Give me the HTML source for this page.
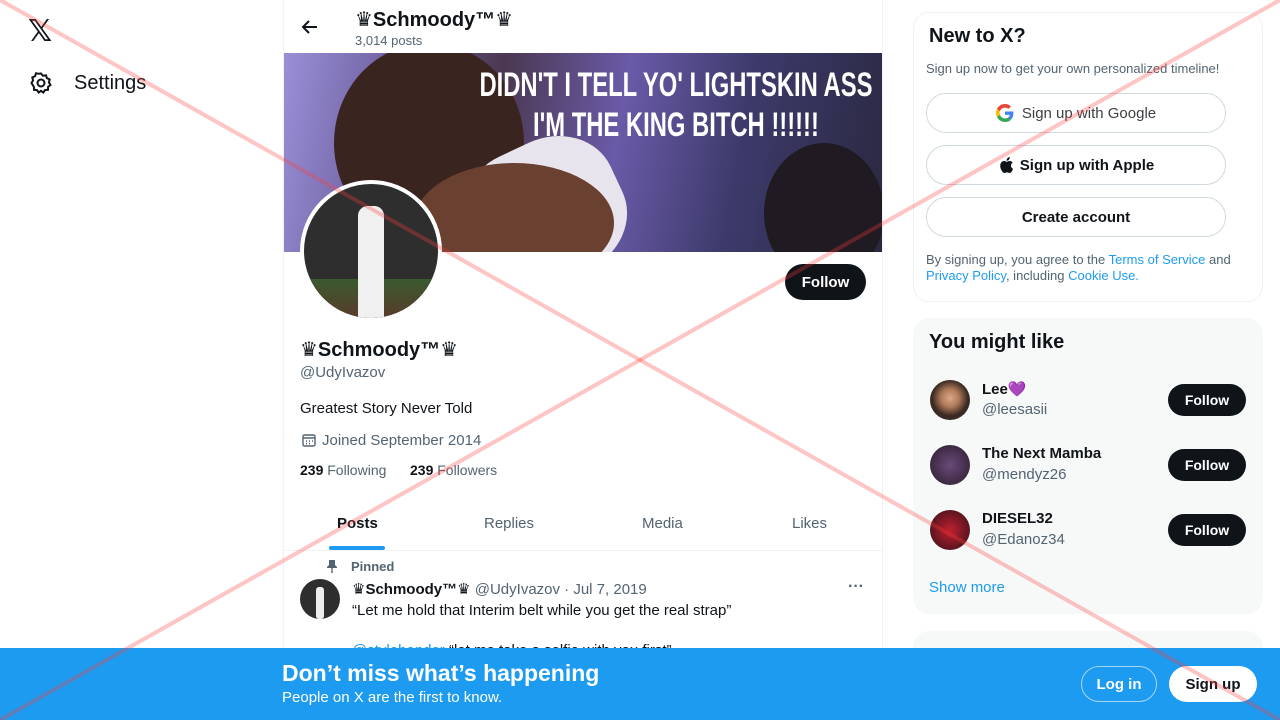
<!DOCTYPE html>
<html><head><meta charset="utf-8"><style>
*{box-sizing:border-box;margin:0;padding:0}
body{width:1280px;height:720px;overflow:hidden;background:#fff;font-family:"Liberation Sans","DejaVu Sans",sans-serif;color:#0f1419;position:relative}
.abs{position:absolute}
.btn{position:absolute;border-radius:999px;font-weight:bold;display:flex;align-items:center;justify-content:center}
.grey{color:#536471}
.blue{color:#1d9bf0}
</style></head><body>
<div class="abs" style="left:28px;top:14px;font-size:30px;font-weight:bold">𝕏</div>
<svg class="abs" style="left:29px;top:71px" width="24" height="24" viewBox="0 0 24 24" fill="none" stroke="#0f1419" stroke-width="2"><circle cx="12" cy="12" r="3.5"/><path d="M12 2.5l2 2.3 3-.5.9 2.9 2.8 1.2-.8 2.9 1.6 2.7-2.4 1.8-.1 3-3 .3-1.7 2.5-2.3-1.8-2.3 1.8-1.7-2.5-3-.3-.1-3L2.5 12l1.6-2.7-.8-2.9 2.8-1.2.9-2.9 3 .5z"/></svg>
<div class="abs" style="left:74px;top:72px;font-size:20px">Settings</div>

<div class="abs" style="left:283px;top:0;width:600px;height:720px;border-left:1px solid #eff3f4;border-right:1px solid #eff3f4"></div>
<svg class="abs" style="left:300px;top:17px" width="20" height="20" viewBox="0 0 20 20" fill="none" stroke="#0f1419" stroke-width="2"><path d="M17 10H4M9 4l-6 6 6 6"/></svg>
<div class="abs" style="left:355px;top:7px;font-size:20px;font-weight:bold">♛Schmoody™♛</div>
<div class="abs grey" style="left:355px;top:33px;font-size:13px">3,014 posts</div>
<div class="abs" style="left:284px;top:53px;width:598px;height:199px;background:linear-gradient(100deg,#9a90d8 0%,#6a5a98 20%,#4a3850 35%,#6a5aa8 55%,#3c3a6a 75%,#2a2840 100%);overflow:hidden">
 <div class="abs" style="left:50px;top:-10px;width:190px;height:200px;border-radius:50%;background:#3a2420"></div>
 <div class="abs" style="left:180px;top:90px;width:160px;height:140px;border-radius:40%;background:#e8e4ee;transform:rotate(-25deg)"></div>
 <div class="abs" style="left:130px;top:110px;width:200px;height:120px;border-radius:50%;background:#6a4030"></div>
 <div class="abs" style="left:480px;top:90px;width:120px;height:140px;border-radius:50%;background:#201a22"></div>
 <div class="abs" style="right:10px;top:12px;text-align:center;color:#fff;font-weight:bold;font-size:34px;line-height:40px;white-space:nowrap;transform:scaleX(.7);transform-origin:right">DIDN'T I TELL YO' LIGHTSKIN ASS<br>I'M THE KING BITCH !!!!!!</div>
</div>
<div class="abs" style="left:300px;top:180px;width:142px;height:142px;border-radius:50%;background:#fff;padding:4px"><div style="width:100%;height:100%;border-radius:50%;background:#2e2e2e;position:relative;overflow:hidden"><div class="abs" style="left:54px;top:22px;width:26px;height:120px;background:#f0f0f0;border-radius:10px"></div><div class="abs" style="left:0;top:95px;width:134px;height:40px;background:linear-gradient(#3a5a30,#5a3a2a)"></div><div class="abs" style="left:54px;top:22px;width:26px;height:120px;background:#f0f0f0;border-radius:10px"></div></div></div>
<div class="btn" style="left:785px;top:264px;width:81px;height:36px;background:#0f1419;color:#fff;font-size:15px">Follow</div>
<div class="abs" style="left:300px;top:337px;font-size:20px;font-weight:bold">♛Schmoody™♛</div>
<div class="abs grey" style="left:300px;top:364px;font-size:15px">@UdyIvazov</div>
<div class="abs" style="left:300px;top:400px;font-size:15px">Greatest Story Never Told</div>
<svg class="abs" style="left:301px;top:432px" width="16" height="16" viewBox="0 0 16 16" fill="none" stroke="#536471" stroke-width="1.4"><rect x="2" y="3" width="12" height="11" rx="1.5"/><path d="M2 6h12M5 9h1M8 9h1M11 9h1M5 11.5h1M8 11.5h1"/></svg>
<div class="abs grey" style="left:322px;top:432px;font-size:15px">Joined September 2014</div>
<div class="abs" style="left:300px;top:462px;font-size:14px"><b>239</b> <span class="grey">Following</span></div>
<div class="abs" style="left:410px;top:462px;font-size:14px"><b>239</b> <span class="grey">Followers</span></div>
<div class="abs" style="left:337px;top:515px;font-size:15px;font-weight:bold">Posts</div>
<div class="abs" style="left:329px;top:546px;width:56px;height:4px;border-radius:2px;background:#1d9bf0"></div>
<div class="abs grey" style="left:484px;top:515px;font-size:15px">Replies</div>
<div class="abs grey" style="left:642px;top:515px;font-size:15px">Media</div>
<div class="abs grey" style="left:792px;top:515px;font-size:15px">Likes</div>
<div class="abs" style="left:284px;top:550px;width:598px;height:1px;background:#eff3f4"></div>
<svg class="abs" style="left:326px;top:559px" width="12" height="14" viewBox="0 0 12 14" fill="#536471"><path d="M3 1h6v5l2 2v1H1V8l2-2zM5.3 9h1.4v5H5.3z"/></svg>
<div class="abs grey" style="left:351px;top:559px;font-size:13px;font-weight:bold">Pinned</div>
<div class="abs" style="left:300px;top:579px;width:40px;height:40px;border-radius:50%;background:#2e2e2e;overflow:hidden"><div class="abs" style="left:16px;top:8px;width:8px;height:32px;background:#eee;border-radius:3px"></div></div>
<div class="abs" style="left:352px;top:580px;font-size:15px"><b>♛Schmoody™♛</b> <span class="grey">@UdyIvazov · Jul 7, 2019</span></div>
<div class="abs grey" style="left:848px;top:578px;font-size:16px;font-weight:bold">···</div>
<div class="abs" style="left:352px;top:602px;font-size:15px">“Let me hold that Interim belt while you get the real strap”</div>
<div class="abs" style="left:352px;top:642px;font-size:15px"><span class="blue">@stylebender</span> “let me take a selfie with you first”</div>

<div class="abs" style="left:913px;top:12px;width:350px;height:290px;border:1px solid #eff3f4;border-radius:16px"></div>
<div class="abs" style="left:929px;top:25px;font-size:20px;font-weight:bold">New to X?</div>
<div class="abs grey" style="left:926px;top:61px;font-size:13px">Sign up now to get your own personalized timeline!</div>
<div class="btn" style="left:926px;top:93px;width:300px;height:40px;border:1px solid #cfd9de;font-size:15px;font-weight:normal;color:#3c4043"><svg width="18" height="18" viewBox="0 0 48 48" style="margin-right:8px"><path fill="#EA4335" d="M24 9.5c3.5 0 6.6 1.2 9 3.5l6.7-6.7C35.6 2.4 30.2 0 24 0 14.6 0 6.6 5.4 2.6 13.2l7.8 6C12.3 13.6 17.700 9.500 24 9.500z"/><path fill="#4285F4" d="M46.5 24.5c0-1.6-.1-3.1-.4-4.5H24v9h12.7c-.6 3-2.3 5.5-4.8 7.2l7.6 5.9c4.4-4.1 7-10.1 7-17.6z"/><path fill="#FBBC05" d="M10.4 28.8c-.5-1.5-.8-3.1-.8-4.8s.3-3.3.8-4.8l-7.8-6C1 16.4 0 20.1 0 24s1 7.6 2.6 10.8z"/><path fill="#34A853" d="M24 48c6.5 0 11.9-2.1 15.9-5.8l-7.6-5.9c-2.1 1.4-4.9 2.3-8.3 2.3-6.3 0-11.7-4.1-13.6-9.8l-7.8 6C6.6 42.6 14.6 48 24 48z"/></svg>Sign up with Google</div>
<div class="btn" style="left:926px;top:145px;width:300px;height:40px;border:1px solid #cfd9de;font-size:15px">
<svg width="16" height="18" viewBox="0 0 16 18" style="margin-right:6px"><path fill="#0f1419" d="M13 9.6c0-2 1.6-3 1.7-3-.9-1.4-2.4-1.5-2.9-1.6-1.2-.1-2.4.7-3 .7s-1.6-.7-2.6-.7C4.8 5 3.6 5.8 2.9 7c-1.4 2.4-.4 6 1 8 .7 1 1.5 2 2.5 2s1.4-.6 2.6-.6 1.5.6 2.6.6 1.7-1 2.4-2c.7-1.1 1-2.2 1-2.3-.1 0-2-.8-2-3.1zM11 3.6c.5-.7.9-1.6.8-2.6-.8 0-1.8.5-2.4 1.2-.5.6-1 1.6-.8 2.5.9.1 1.8-.4 2.4-1.1z"/></svg>Sign up with Apple</div>
<div class="btn" style="left:926px;top:197px;width:300px;height:40px;border:1px solid #cfd9de;font-size:15px">Create account</div>
<div class="abs grey" style="left:926px;top:252px;width:320px;font-size:13px;line-height:16px">By signing up, you agree to the <span class="blue">Terms of Service</span> and <span class="blue">Privacy Policy</span>, including <span class="blue">Cookie Use.</span></div>

<div class="abs" style="left:913px;top:318px;width:350px;height:296px;background:#f7f9f9;border-radius:16px"></div>
<div class="abs" style="left:929px;top:331px;font-size:20px;font-weight:bold">You might like</div>
<div class="abs" style="left:930px;top:380px;width:40px;height:40px;border-radius:50%;background:radial-gradient(circle at 50% 45%,#d9a88a 0,#b07a5a 30%,#3a2a22 60%)"></div>
<div class="abs" style="left:982px;top:380px;font-size:15px;font-weight:bold">Lee<span style="color:#a77ee0">💜</span></div>
<div class="abs grey" style="left:982px;top:401px;font-size:15px">@leesasii</div>
<div class="btn" style="left:1168px;top:384px;width:78px;height:32px;background:#0f1419;color:#fff;font-size:14px">Follow</div>
<div class="abs" style="left:930px;top:445px;width:40px;height:40px;border-radius:50%;background:radial-gradient(circle,#6a4a7a,#2a1a2a)"></div>
<div class="abs" style="left:982px;top:445px;font-size:15px;font-weight:bold">The Next Mamba</div>
<div class="abs grey" style="left:982px;top:466px;font-size:15px">@mendyz26</div>
<div class="btn" style="left:1168px;top:449px;width:78px;height:32px;background:#0f1419;color:#fff;font-size:14px">Follow</div>
<div class="abs" style="left:930px;top:510px;width:40px;height:40px;border-radius:50%;background:radial-gradient(circle,#c02030,#301018)"></div>
<div class="abs" style="left:982px;top:510px;font-size:15px;font-weight:bold">DIESEL32</div>
<div class="abs grey" style="left:982px;top:531px;font-size:15px">@Edanoz34</div>
<div class="btn" style="left:1168px;top:514px;width:78px;height:32px;background:#0f1419;color:#fff;font-size:14px">Follow</div>
<div class="abs blue" style="left:929px;top:579px;font-size:15px">Show more</div>
<div class="abs" style="left:913px;top:631px;width:350px;height:40px;background:#f7f9f9;border-radius:16px"></div>

<div class="abs" style="left:0;top:648px;width:1280px;height:72px;background:#1d9bf0"></div>
<div class="abs" style="left:282px;top:660px;font-size:23px;font-weight:bold;color:#fff">Don’t miss what’s happening</div>
<div class="abs" style="left:282px;top:689px;font-size:15px;color:#fff">People on X are the first to know.</div>
<div class="btn" style="left:1081px;top:666px;width:76px;height:36px;border:1px solid rgba(255,255,255,.6);color:#fff;font-size:15px">Log in</div>
<div class="btn" style="left:1169px;top:666px;width:88px;height:36px;background:#fff;font-size:15px">Sign up</div>

<svg class="abs" style="left:0;top:0;pointer-events:none" width="1280" height="720"><line x1="0" y1="0" x2="1280" y2="720" stroke="rgba(255,60,60,0.3)" stroke-width="4"/><line x1="1280" y1="0" x2="0" y2="720" stroke="rgba(255,60,60,0.3)" stroke-width="4"/></svg>
</body></html>
